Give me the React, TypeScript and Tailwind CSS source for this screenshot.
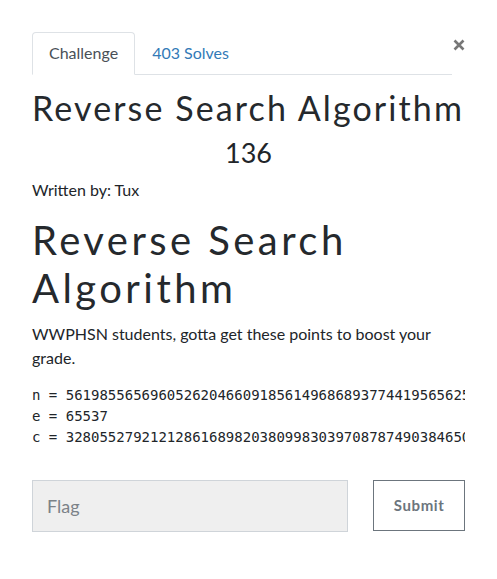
export default function App() {
  const n =
    "56198556569605262046609185614968689377441956562541637281902837465";
  const c =
    "32805527921212861689820380998303970878749038465098123746512093847";

  return (
    <div className="min-h-screen bg-white px-8 pt-8 font-['Lato','Open_Sans',sans-serif] text-[#212529]">
      <div className="w-[433px]">
        {/* Tabs */}
        <div className="flex items-start">
          <ul className="flex flex-1 border-b border-[#dee2e6]">
            <li className="-mb-px rounded-t-[4px] border border-[#dee2e6] border-b-white bg-white px-4 py-2 text-[16px] leading-6 text-[#495057]">
              Challenge
            </li>
            <li className="border border-transparent px-4 py-2 text-[16px] leading-6 text-[#337ab7]">
              403 Solves
            </li>
          </ul>
          <button className="ml-[1px] mt-[7px] flex h-[12px] w-[12px] items-center justify-center">
            <svg width="12" height="12" viewBox="0 0 12 12">
              <path
                d="M1.5 1.5 L10.5 10.5 M10.5 1.5 L1.5 10.5"
                stroke="#777"
                strokeWidth="2.6"
                strokeLinecap="butt"
              />
            </svg>
          </button>
        </div>

        {/* Title */}
        <h2 className="mt-[13px] whitespace-nowrap text-[34px] font-normal leading-[1.2] tracking-[0.062em] text-[#25292d]">
          Reverse Search Algorithm
        </h2>
        <h3 className="mt-[8px] text-center text-[27px] leading-[1.2]">136</h3>
        <p className="mt-[9px] text-[16px] leading-6">Written by: Tux</p>

        {/* Description */}
        <h1 className="mt-[14px] text-[40px] font-normal leading-[1.2] tracking-[0.086em] text-[#25292d]">
          Reverse Search Algorithm
        </h1>
        <p className="mt-[10px] text-[16px] leading-6">
          WWPHSN students, gotta get these points to boost your grade.
        </p>
        <pre className="mt-[15px] overflow-hidden font-['DejaVu_Sans_Mono',monospace] text-[14px] leading-[21px]">
          {`n = ${n}\ne = 65537\nc = ${c}`}
        </pre>

        {/* Flag form */}
        <div className="mt-[32px] flex">
          <input
            placeholder="Flag"
            className="h-[52px] w-[317px] border border-[#cfd4d9] bg-[#efefef] pl-[14px] text-[18px] text-[#495057] outline-none placeholder:text-[#7b8288]"
          />
          <button className="ml-[25px] h-[51px] w-[92px] border border-[#6c757d] bg-white text-[15px] font-bold tracking-[0.04em] text-[#6c757d]">
            Submit
          </button>
        </div>
      </div>
    </div>
  );
}
